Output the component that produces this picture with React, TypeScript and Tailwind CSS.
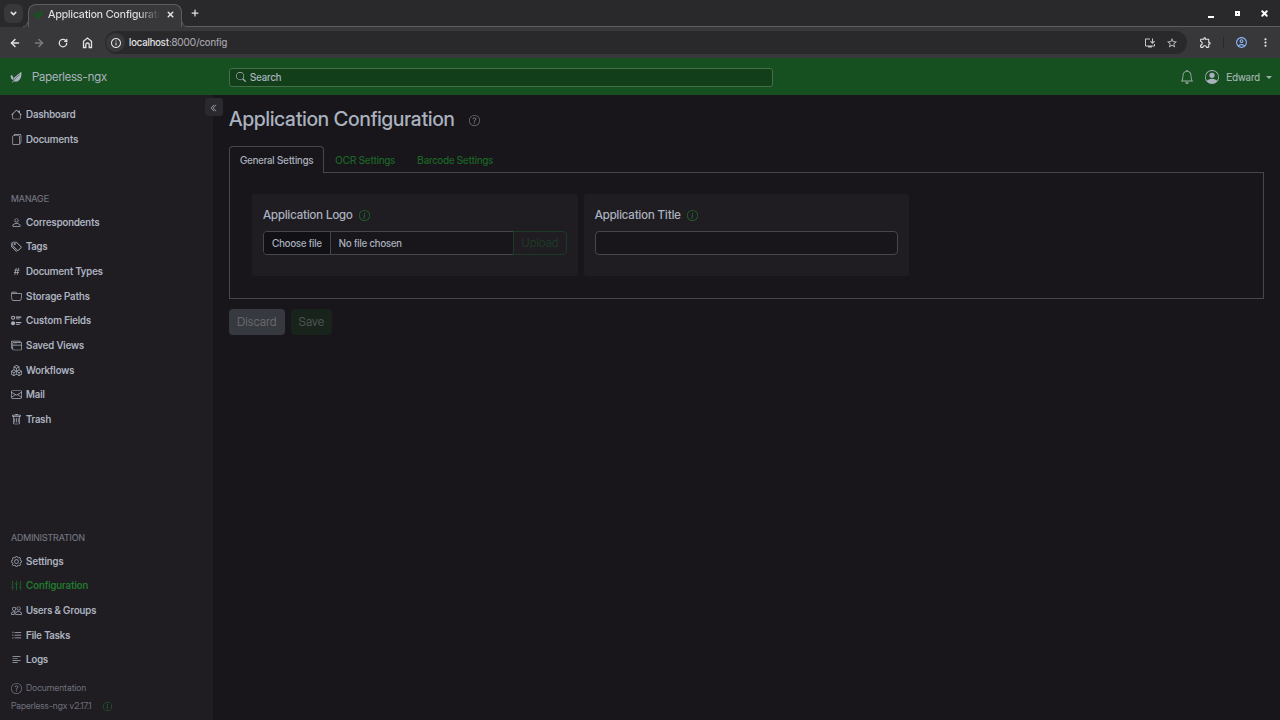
import type { ReactNode } from "react";
import type { IconType } from "react-icons";
import { ArrowLeft, ArrowRight, ChevronDown, Plus, RotateCw, X } from "lucide-react";
import {
  BsBell,
  BsBoxes,
  BsChevronDoubleLeft,
  BsEnvelope,
  BsFiles,
  BsFolder,
  BsGear,
  BsHash,
  BsHouse,
  BsInfoCircle,
  BsListTask,
  BsPeople,
  BsPerson,
  BsPersonCircle,
  BsQuestionCircle,
  BsSearch,
  BsSliders2Vertical,
  BsTags,
  BsTextLeft,
  BsTrash,
  BsUiRadios,
  BsWindowStack,
} from "react-icons/bs";
import {
  MdMoreVert,
  MdOutlineAccountCircle,
  MdOutlineExtension,
  MdOutlineInfo,
  MdOutlineInstallDesktop,
  MdStarBorder,
} from "react-icons/md";

type Item = { label: string; icon: IconType; active?: boolean };

const mainItems: Item[] = [
  { label: "Dashboard", icon: BsHouse },
  { label: "Documents", icon: BsFiles },
];

const manageItems: Item[] = [
  { label: "Correspondents", icon: BsPerson },
  { label: "Tags", icon: BsTags },
  { label: "Document Types", icon: BsHash },
  { label: "Storage Paths", icon: BsFolder },
  { label: "Custom Fields", icon: BsUiRadios },
  { label: "Saved Views", icon: BsWindowStack },
  { label: "Workflows", icon: BsBoxes },
  { label: "Mail", icon: BsEnvelope },
  { label: "Trash", icon: BsTrash },
];

const adminItems: Item[] = [
  { label: "Settings", icon: BsGear },
  { label: "Configuration", icon: BsSliders2Vertical, active: true },
  { label: "Users & Groups", icon: BsPeople },
  { label: "File Tasks", icon: BsListTask },
  { label: "Logs", icon: BsTextLeft },
];

function Leaf({ className }: { className: string }) {
  return (
    <svg viewBox="0 0 24 24" className={className} fill="currentColor" aria-hidden="true">
      <path d="M22.5 1C24 9 22 17 15.500 20.500C13 21.800 10 21.500 7.500 20.500L4.500 23.500L3.800 22.600L7 19C5.500 12 15.500 9 22.500 1Z" />
      <path d="M2 7.500C6.500 10 8 13.500 6.200 17.800C1.800 16.500 .5 12 2 7.500Z" />
      <path d="M7.500 19.500C10.500 14.500 15 11 19 7.500" stroke="#164f20" strokeWidth="1" fill="none" />
    </svg>
  );
}

function HomeIcon() {
  return (
    <svg viewBox="0 0 13 13" className="h-[13px] w-[13px]" fill="none" stroke="currentColor" aria-hidden="true">
      <path d="M2.500 11.500V5.200L6.500 2L10.500 5.200V11.500H8.200V8.500Q8.200 7 6.500 7Q4.800 7 4.800 8.500V11.500Z" strokeWidth="1.300" />
    </svg>
  );
}

function BrowserChrome() {
  return (
    <div className="text-[#e3e3e5]">
      <div className="flex h-[27px] items-end bg-[#29282b]">
        <button
          aria-label="Search tabs"
          className="mb-1 ml-1 flex h-[19px] w-[19px] items-center justify-center rounded-md bg-[#38373a]"
        >
          <ChevronDown className="h-[9px] w-[9px]" strokeWidth={4} />
        </button>
        <svg viewBox="0 0 5 5" className="h-[5px] w-[5px]" fill="none" aria-hidden="true">
          <path d="M0 5C3 5 5 3 5 0V5Z" fill="#38373a" />
          <path d="M0 4.500C3 4.500 4.500 3 4.500 0" stroke="#5d5c60" />
        </svg>
        <div className="flex h-[23px] w-[154px] items-center rounded-t-lg border border-b-0 border-[#5d5c60] bg-[#38373a] pb-1 pl-1">
          <Leaf className="h-[10px] w-[10px] text-[#17541f]" />
          <span className="ml-[5px] w-28 overflow-hidden bg-linear-to-r from-[#e3e3e5] from-80% to-transparent bg-clip-text text-[11px] font-medium whitespace-nowrap text-transparent">
            Application Configuration
          </span>
          <button aria-label="Close tab" className="ml-[6px]">
            <X className="h-[9px] w-[9px]" strokeWidth={4} />
          </button>
        </div>
        <svg viewBox="0 0 5 5" className="h-[5px] w-[5px]" fill="none" aria-hidden="true">
          <path d="M5 5C2 5 0 3 0 0V5Z" fill="#38373a" />
          <path d="M5 4.500C2 4.500 .5 3 .5 0" stroke="#5d5c60" />
        </svg>
        <div className="flex h-full grow items-center border-b border-[#5d5c60]">
          <button aria-label="New tab" className="ml-[3px]">
            <Plus className="h-[10px] w-[10px]" strokeWidth={3} />
          </button>
          <div className="mr-[11px] ml-auto flex items-center gap-[18px] text-white">
            <button aria-label="Minimize" className="flex h-[9px] w-[9px] items-end justify-center">
              <span className="h-[2px] w-[6px] bg-white" />
            </button>
            <button aria-label="Restore" className="flex h-[9px] w-[9px] items-center justify-center">
              <span className="h-[5px] w-[5px] border-2 border-white" />
            </button>
            <button aria-label="Close window">
              <X className="h-[9px] w-[9px]" strokeWidth={5} />
            </button>
          </div>
        </div>
      </div>
      <div className="flex h-[31px] items-center bg-[#38373a] pr-2 pl-[9px]">
        <button aria-label="Back">
          <ArrowLeft className="h-3 w-3" strokeWidth={3} />
        </button>
        <button aria-label="Forward" className="ml-3 text-[#7c7b7f]">
          <ArrowRight className="h-3 w-3" strokeWidth={3} />
        </button>
        <button aria-label="Reload" className="ml-[13px]">
          <RotateCw className="h-[10px] w-[10px]" strokeWidth={3} />
        </button>
        <button aria-label="Home" className="ml-[13px]">
          <HomeIcon />
        </button>
        <div className="ml-[11px] flex h-[23px] grow items-center rounded-full bg-[#29282b] pr-[9px] pl-px">
          <span className="flex h-[19px] w-[19px] items-center justify-center rounded-full bg-[#38373a]">
            <MdOutlineInfo className="h-3 w-3" />
          </span>
          <span className="ml-1 text-[10px] font-medium text-[#a2a1a6]">
            <span className="text-[#e3e3e5]">localhost</span>:8000/config
          </span>
          <button aria-label="Install app" className="ml-auto text-[#c7c6ca]">
            <MdOutlineInstallDesktop className="h-3 w-3" />
          </button>
          <button aria-label="Bookmark" className="ml-[10px] text-[#c7c6ca]">
            <MdStarBorder className="h-3 w-3" />
          </button>
        </div>
        <button aria-label="Extensions" className="ml-3">
          <MdOutlineExtension className="h-[13px] w-[13px]" />
        </button>
        <span className="ml-[11px] h-[11px] w-px bg-[#29282b]" />
        <button aria-label="Profile" className="ml-[11px] text-[#8ab4f8]">
          <MdOutlineAccountCircle className="h-[13px] w-[13px]" />
        </button>
        <button aria-label="Menu" className="ml-[11px]">
          <MdMoreVert className="h-[13px] w-[13px]" />
        </button>
      </div>
    </div>
  );
}

function Header() {
  return (
    <header className="flex h-[37px] items-center bg-[#164f20] pt-px pr-2">
      <a href="#" className="flex w-[229px] shrink-0 items-center pl-[10px] text-xs text-[#abb2bf]">
        <Leaf className="mr-[10px] h-3 w-3" />
        Paperless-ngx
      </a>
      <label className="flex h-[19px] w-[544px] items-center rounded-[3px] border border-[#417149] bg-[#123f19] pl-[6px] text-[#abb2bf]">
        <BsSearch className="h-[10px] w-[10px]" />
        <input
          type="search"
          aria-label="Search"
          placeholder="Search"
          className="ml-1 min-w-0 grow bg-transparent text-[10px] font-medium outline-none placeholder:text-[#abb2bf]"
        />
      </label>
      <div className="ml-auto flex items-center text-[#9db0a8]">
        <button aria-label="Notifications">
          <BsBell className="h-[14px] w-[14px]" />
        </button>
        <button className="ml-[11px] flex items-center text-[10px] font-medium">
          <BsPersonCircle className="mr-[7px] h-[14px] w-[14px] text-[#abb2bf]" />
          Edward
          <span className="ml-[6px] border-x-3 border-t-3 border-x-transparent border-t-[#9db0a8]" />
        </button>
      </div>
    </header>
  );
}

function NavItem({ label, icon: Icon, active }: Item) {
  return (
    <a
      href="#"
      className={`flex items-center gap-1 pl-[11px] text-[10px] font-semibold ${
        active ? "text-[#1f7a2d]" : "text-[#abb2bf]"
      }`}
    >
      <Icon className="h-[11px] w-[11px]" />
      {label}
    </a>
  );
}

function Sidebar() {
  return (
    <nav className="flex w-[213px] shrink-0 flex-col bg-[#1f1c22]">
      <div className="mt-[7px] grid h-[50px] auto-rows-fr">
        {mainItems.map((item) => (
          <NavItem key={item.label} {...item} />
        ))}
      </div>
      <h6 className="mt-10 mb-1 pl-[11px] text-[9px] leading-[14px] font-medium text-[#70737d]">MANAGE</h6>
      <div className="grid h-[222px] auto-rows-fr">
        {manageItems.map((item) => (
          <NavItem key={item.label} {...item} />
        ))}
      </div>
      <h6 className="mt-auto mb-1 pl-[11px] text-[9px] leading-[14px] font-medium text-[#70737d]">ADMINISTRATION</h6>
      <div className="grid h-[123px] auto-rows-fr">
        {adminItems.map((item) => (
          <NavItem key={item.label} {...item} />
        ))}
      </div>
      <a href="#" className="mt-[7px] flex h-[18px] items-center gap-1 pl-[11px] text-[9px] text-[#70737d]">
        <BsQuestionCircle className="h-[11px] w-[11px]" />
        Documentation
      </a>
      <div className="mb-[5px] flex h-[18px] items-center pl-[11px] text-[9px] text-[#70737d]">
        <a href="#">Paperless-ngx v2.17.1</a>
        <BsInfoCircle className="ml-3 h-[9px] w-[9px] text-[#1f6f2b]" />
      </div>
    </nav>
  );
}

function OptionCard({ title, htmlFor, children }: { title: string; htmlFor: string; children: ReactNode }) {
  return (
    <div className="h-[82px] rounded-[3px] bg-[#1f1c22] px-[11px] pt-3">
      <div className="flex h-[18px] items-center text-xs font-medium text-[#abb2bf]">
        <label htmlFor={htmlFor}>{title}</label>
        <button aria-label={`About ${title}`} className="ml-[6px] text-[#1f6f2b]">
          <BsInfoCircle className="h-[11px] w-[11px]" />
        </button>
      </div>
      <div className="mt-[7px] flex h-6">{children}</div>
    </div>
  );
}

export default function App() {
  return (
    <div className="flex min-h-screen flex-col bg-[#18161b] font-['Inter_Display','Inter',sans-serif] text-[#abb2bf]">
      <BrowserChrome />
      <Header />
      <div className="flex grow">
        <Sidebar />
        <main className="relative min-w-0 grow px-4 pt-3">
          <button
            aria-label="Collapse sidebar"
            className="absolute top-[3px] -left-2 flex h-[18px] w-[18px] items-center justify-center rounded-[3px] bg-[#29292e] pt-px"
          >
            <BsChevronDoubleLeft className="h-2 w-2" />
          </button>
          <div className="flex h-[23px] items-center">
            <h3 className="text-[20px] font-medium">Application Configuration</h3>
            <button aria-label="Help" className="mt-[3px] ml-[14px] text-[#70737d]">
              <BsQuestionCircle className="h-[11px] w-[11px]" />
            </button>
          </div>
          <div role="tablist" className="mt-4 flex h-[26px] text-[10px] font-medium">
            <button
              role="tab"
              aria-selected="true"
              className="relative z-10 -mb-px rounded-t-[4px] border border-b-0 border-[#47464b] bg-[#18161b] px-[10px]"
            >
              General Settings
            </button>
            <button role="tab" className="px-[11px] pt-[2px] text-[#1b6526]">
              OCR Settings
            </button>
            <button role="tab" className="px-[11px] pt-[2px] text-[#1b6526]">
              Barcode Settings
            </button>
          </div>
          <div className="grid grid-cols-3 gap-[6px] border border-[#47464b] px-[22px] pt-[21px] pb-[22px]">
            <OptionCard title="Application Logo" htmlFor="app-logo">
              <label className="flex min-w-0 grow cursor-pointer rounded-l-[4px] border border-[#47464b] bg-[#18161b] text-[10px] leading-[22px] font-medium">
                <span className="rounded-l-[3px] border-r border-[#47464b] bg-[#111015] px-2">Choose file</span>
                <span className="px-2">No file chosen</span>
                <input id="app-logo" type="file" className="sr-only" />
              </label>
              <button
                disabled
                className="-ml-px rounded-r-[4px] border border-[#1d3a25] px-[7px] text-xs text-[#1d3a25]"
              >
                Upload
              </button>
            </OptionCard>
            <OptionCard title="Application Title" htmlFor="app-title">
              <input
                id="app-title"
                type="text"
                className="min-w-0 grow rounded-[4px] border border-[#47464b] bg-[#18161b] px-2 text-[10px]"
              />
            </OptionCard>
          </div>
          <div className="mt-[10px] flex gap-[6px] text-xs">
            <button disabled className="h-[26px] rounded-[4px] bg-[#36393f] px-2 text-[#67676b]">
              Discard
            </button>
            <button disabled className="h-[26px] rounded-[4px] bg-[#18231c] px-2 text-[#4c5350]">
              Save
            </button>
          </div>
        </main>
      </div>
    </div>
  );
}
